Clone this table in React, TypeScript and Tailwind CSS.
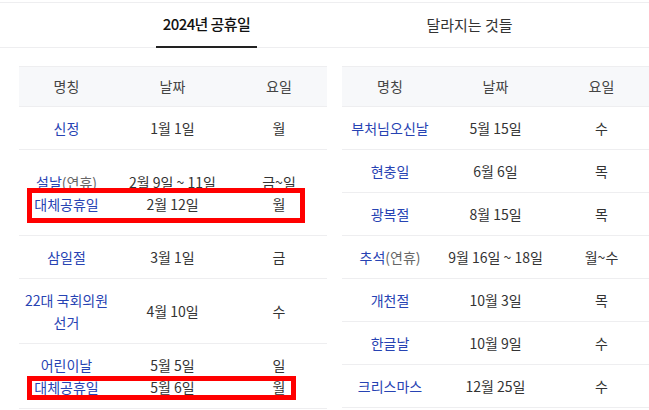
import React from "react";

type Row = { name: React.ReactNode; date: React.ReactNode; day: React.ReactNode; h: string };

const F = { fontFamily: '"Noto Sans CJK KR", "Noto Sans", sans-serif' };

const Blue = ({ children }: { children: React.ReactNode }) => (
  <span className="text-[#2743b3]">{children}</span>
);
const Gray = ({ children }: { children: React.ReactNode }) => (
  <span className="text-[#666]">{children}</span>
);

const Two = ({ a, b }: { a: React.ReactNode; b: React.ReactNode }) => (
  <div className="flex flex-col items-center leading-[22px]">
    <div>{a}</div>
    <div>{b}</div>
  </div>
);

const left: Row[] = [
  { name: <Blue>신정</Blue>, date: "1월 1일", day: "월", h: "h-[43px]" },
  {
    name: (
      <Two
        a={
          <>
            <Blue>설날</Blue>
            <Gray>(연휴)</Gray>
          </>
        }
        b={<Blue>대체공휴일</Blue>}
      />
    ),
    date: <Two a="2월 9일 ~ 11일" b="2월 12일" />,
    day: <Two a="금~일" b="월" />,
    h: "h-[86px]",
  },
  { name: <Blue>삼일절</Blue>, date: "3월 1일", day: "금", h: "h-[43px]" },
  {
    name: <Two a={<Blue>22대 국회의원</Blue>} b={<Blue>선거</Blue>} />,
    date: "4월 10일",
    day: "수",
    h: "h-[65px]",
  },
  {
    name: <Two a={<Blue>어린이날</Blue>} b={<Blue>대체공휴일</Blue>} />,
    date: <Two a="5월 5일" b="5월 6일" />,
    day: <Two a="일" b="월" />,
    h: "h-[65px]",
  },
];

const right: Row[] = [
  { name: <Blue>부처님오신날</Blue>, date: "5월 15일", day: "수", h: "h-[43px]" },
  { name: <Blue>현충일</Blue>, date: "6월 6일", day: "목", h: "h-[43px]" },
  { name: <Blue>광복절</Blue>, date: "8월 15일", day: "목", h: "h-[43px]" },
  {
    name: (
      <span>
        <Blue>추석</Blue>
        <Gray>(연휴)</Gray>
      </span>
    ),
    date: "9월 16일 ~ 18일",
    day: "월~수",
    h: "h-[43px]",
  },
  { name: <Blue>개천절</Blue>, date: "10월 3일", day: "목", h: "h-[43px]" },
  { name: <Blue>한글날</Blue>, date: "10월 9일", day: "수", h: "h-[43px]" },
  { name: <Blue>크리스마스</Blue>, date: "12월 25일", day: "수", h: "h-[43px]" },
];

function Table({ rows, cols, children }: { rows: Row[]; cols: string; children?: React.ReactNode }) {
  return (
    <div className="relative w-[308px] shrink-0">
      <div
        className={`grid ${cols} h-[41px] items-center border-y border-[#eeeef0] bg-[#f7f8fa] text-[#444]`}
      >
        <div className="text-center">명칭</div>
        <div className="text-center">날짜</div>
        <div className="text-center">요일</div>
      </div>
      {rows.map((r, i) => (
        <div
          key={i}
          className={`grid ${cols} ${r.h} items-center border-b border-[#eeeef0] text-[#333]`}
        >
          <div className="flex justify-center whitespace-nowrap">{r.name}</div>
          <div className="flex justify-center whitespace-nowrap">{r.date}</div>
          <div className="flex justify-center whitespace-nowrap">{r.day}</div>
        </div>
      ))}
      {children}
    </div>
  );
}

export default function App() {
  return (
    <div className="w-[649px] h-[410px] overflow-hidden bg-white text-[14px]" style={F}>
      <div className="pt-[2px]">
        <div className="flex h-[46px] border-y border-[#eeeef0] pl-[75px]">
          <div className="w-[263px] flex justify-center">
            <div className="-mb-px flex h-[45px] items-center border-b-2 border-[#222] px-[7px] text-[15px] font-medium tracking-[-0.6px] text-[#111]">
              2024년 공휴일
            </div>
          </div>
          <div className="w-[263px] flex items-center justify-center text-[15px] text-[#333]">
            달라지는 것들
          </div>
        </div>
      </div>
      <div className="mt-[18px] flex gap-[15px] pl-[19px]">
        <Table rows={left} cols="grid-cols-[95px_117px_96px]">
          <div className="pointer-events-none absolute left-[8px] top-[122px] h-[35px] w-[278px] border-[5px] border-[#ff0000]" />
          <div className="pointer-events-none absolute left-[8px] top-[310px] h-[24px] w-[269px] border-[5px] border-[#ff0000]" />
        </Table>
        <Table rows={right} cols="grid-cols-[96px_115px_97px]" />
      </div>
    </div>
  );
}
